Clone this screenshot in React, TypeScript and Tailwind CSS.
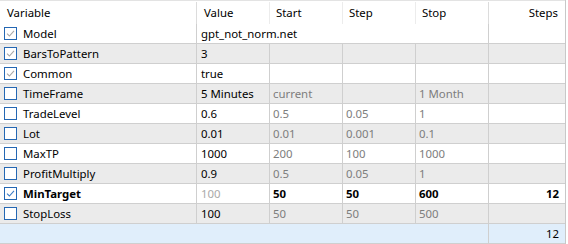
type Row = {
  name: string;
  checked: boolean;
  enabled?: boolean;
  bold?: boolean;
  value: string;
  start?: string;
  step?: string;
  stop?: string;
  steps?: string;
  span?: boolean;
};

const rows: Row[] = [
  { name: 'Model', checked: true, value: 'gpt_not_norm.net', span: true },
  { name: 'BarsToPattern', checked: true, value: '3' },
  { name: 'Common', checked: true, value: 'true' },
  { name: 'TimeFrame', checked: false, value: '5 Minutes', start: 'current', stop: '1 Month' },
  { name: 'TradeLevel', checked: false, value: '0.6', start: '0.5', step: '0.05', stop: '1' },
  { name: 'Lot', checked: false, value: '0.01', start: '0.01', step: '0.001', stop: '0.1' },
  { name: 'MaxTP', checked: false, value: '1000', start: '200', step: '100', stop: '1000' },
  { name: 'ProfitMultiply', checked: false, value: '0.9', start: '0.5', step: '0.05', stop: '1' },
  {
    name: 'MinTarget',
    checked: true,
    enabled: true,
    bold: true,
    value: '100',
    start: '50',
    step: '50',
    stop: '600',
    steps: '12',
  },
  { name: 'StopLoss', checked: false, value: '100', start: '50', step: '50', stop: '500' },
];

function CheckBox(props: { checked: boolean; enabled?: boolean }) {
  return (
    <div className="w-[13px] h-[13px] border border-[#2467b3] bg-white flex items-center justify-center shrink-0">
      {props.checked && (
        <svg width="9" height="9" viewBox="0 0 9 9">
          <path
            d="M1 4.6 L3.4 7 L8 1.8"
            fill="none"
            stroke={props.enabled ? '#3b7cc6' : '#a8a8a8'}
            strokeWidth="1.1"
          />
        </svg>
      )}
    </div>
  );
}

export default function App() {
  return (
    <div
      className="w-[568px] h-[244px] bg-white text-[11.4px] text-black leading-none"
      style={{ fontFamily: '"Noto Sans", "Open Sans", sans-serif' }}
    >
      <div className="w-[566px] border-r border-[#c8c8c8]">
        {/* header */}
        <div className="flex h-[24px] border-t border-[#e3e3e3] items-center pt-[1px]">
          <div className="w-[197px] h-full border-r border-[#dcdcdc] pl-[7px] flex items-center">Variable</div>
          <div className="w-[73px] h-full border-r border-[#ececec] pl-[7px] flex items-center">Value</div>
          <div className="w-[73px] h-full border-r border-[#ececec] pl-[6px] flex items-center">Start</div>
          <div className="w-[73px] h-full border-r border-[#ececec] pl-[6px] flex items-center">Step</div>
          <div className="w-[73px] h-full border-r border-[#dcdcdc] pl-[6px] flex items-center">Stop</div>
          <div className="w-[76px] h-full pr-[7px] flex items-center justify-end">Steps</div>
        </div>

        {rows.map((r, i) => {
          const bg = i % 2 === 1 ? 'bg-[#ebebeb]' : 'bg-white';
          const dim = r.bold ? 'text-black font-bold' : 'text-[#7d7d7d]';
          return (
            <div key={r.name} className={`flex h-[20px] border-b border-[#cfcfcf] ${bg}`}>
              <div className="w-[197px] h-full border-r border-[#cfcfcf] pl-[4px] flex items-center gap-[6px]">
                <CheckBox checked={r.checked} enabled={r.enabled} />
                <span className={r.bold ? 'font-bold' : ''}>{r.name}</span>
              </div>
              {r.span ? (
                <div className="w-[292px] h-full border-r border-[#cfcfcf] pl-[4px] flex items-center">
                  {r.value}
                </div>
              ) : (
                <>
                  <div
                    className={`w-[73px] h-full border-r border-[#cfcfcf] pl-[4px] flex items-center ${
                      r.bold ? 'text-[#a9a9a9]' : ''
                    }`}
                  >
                    {r.value}
                  </div>
                  <div className={`w-[73px] h-full border-r border-[#cfcfcf] pl-[3px] flex items-center ${dim}`}>
                    {r.start}
                  </div>
                  <div className={`w-[73px] h-full border-r border-[#cfcfcf] pl-[3px] flex items-center ${dim}`}>
                    {r.step}
                  </div>
                  <div className={`w-[73px] h-full border-r border-[#cfcfcf] pl-[3px] flex items-center ${dim}`}>
                    {r.stop}
                  </div>
                </>
              )}
              <div className="w-[76px] h-full pr-[6px] flex items-center justify-end font-bold">{r.steps}</div>
            </div>
          );
        })}

        {/* footer */}
        <div className="flex h-[20px] border-b border-[#cfcfcf] bg-[#e0eefb]">
          <div className="w-[489px] h-full border-r border-[#cfcfcf]" />
          <div className="w-[76px] h-full pr-[6px] flex items-center justify-end">12</div>
        </div>
      </div>
    </div>
  );
}
